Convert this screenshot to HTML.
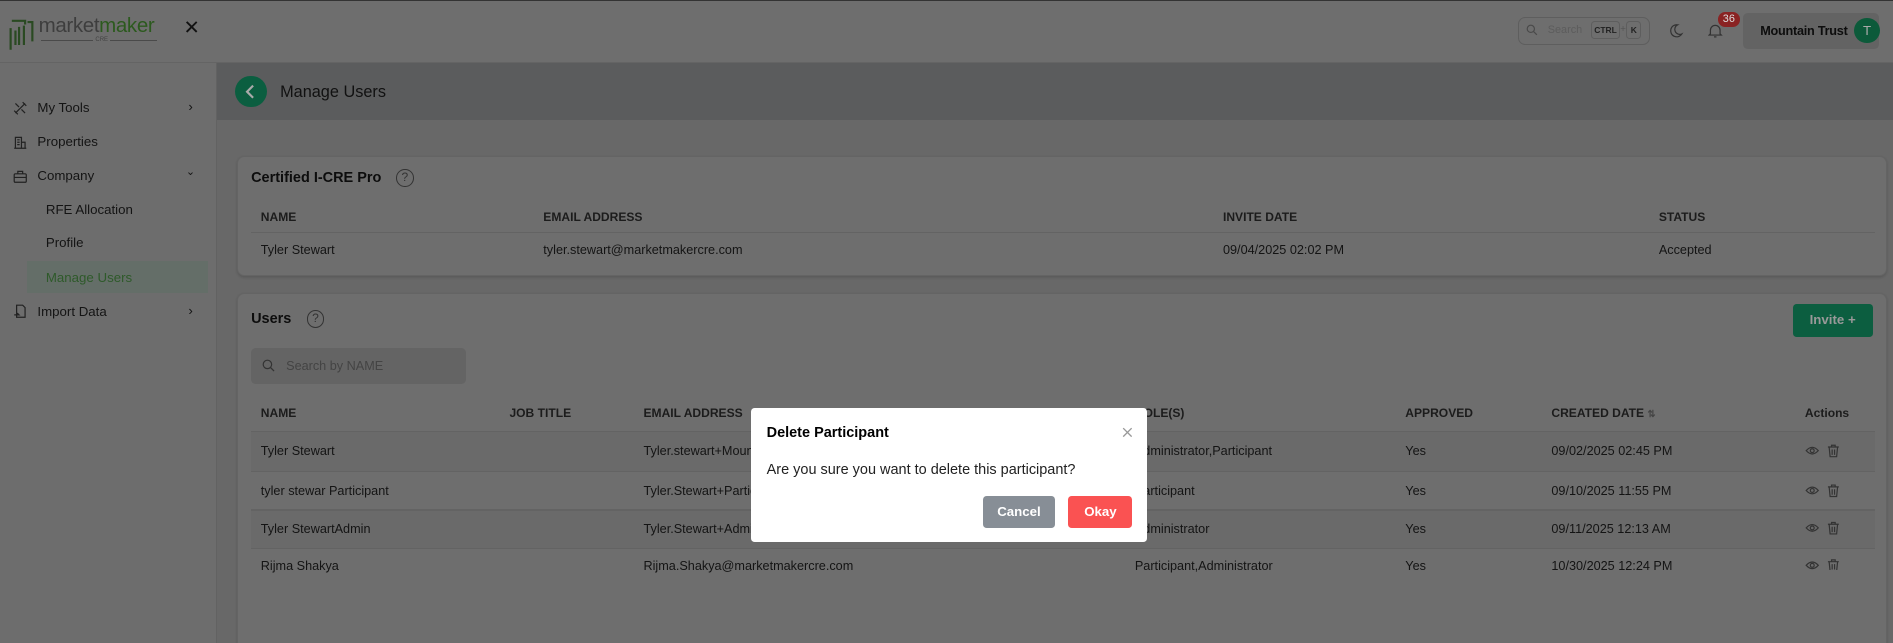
<!DOCTYPE html>
<html><head><meta charset="utf-8"><style>
html,body{margin:0;padding:0;width:1893px;height:643px;overflow:hidden;background:#686868;font-family:"Liberation Sans",sans-serif;}
#w{zoom:1.2073;width:1568px;height:533px;position:relative;color:#111;}
.a{position:absolute;white-space:nowrap;}
.hdr{left:0;top:0;width:1568px;height:52px;background:#6e6e6e;border-bottom:1px solid #646464;border-top:1px solid #333;box-sizing:border-box;}
.side{left:0;top:52px;width:180px;height:481px;background:#6d6d6d;border-right:1px solid #626262;box-sizing:border-box;}
.si{font-size:11px;color:#141414;}
.card{background:#6e6e6e;border:1px solid #646464;border-radius:6px;box-shadow:0 1px 2px rgba(0,0,0,.15);}
.th{font-size:10px;font-weight:bold;color:#1c1c1c;}
.td{font-size:10.5px;color:#141414;}
.line{height:1px;background:#636363;}
</style></head><body><div id="w">
<div class="a hdr"></div>
<svg class="a" style="left:6px;top:13px" width="30" height="30" viewBox="0 0 30 30"><path d="M4 4h11v3M3 10v18M7 12v12M10 9v15M14 8v16M17 5h4v16" stroke="#2a4a22" stroke-width="1.8" fill="none"/></svg>
<div class="a" style="left:32px;top:12px;font-size:17px;color:#3e3e3e;letter-spacing:-0.3px">market<span style="color:#2c5a1e">maker</span></div>
<div class="a" style="left:34px;top:33px;width:96px;height:1px;background:#4a4a4a"></div>
<div class="a" style="left:77px;top:31px;font-size:5px;color:#444;background:#6e6e6e;padding:0 2px">CRE</div>
<div class="a" style="left:152px;top:13px;font-size:16px;color:#111">✕</div>
<div class="a" style="left:1257px;top:14px;width:108px;height:22px;border:1px solid #5e5e5e;border-radius:6px"></div>
<svg class="a" style="left:1264px;top:20px" width="10" height="10" viewBox="0 0 10 10"><circle cx="4" cy="4" r="3" stroke="#4a4a4a" fill="none"/><path d="M6.2 6.2L9 9" stroke="#4a4a4a"/></svg>
<div class="a" style="left:1282px;top:20px;font-size:9px;color:#5c5c5c">Search</div>
<div class="a" style="left:1318px;top:17px;width:22px;height:14px;border:1px solid #5e5e5e;border-radius:3px;font-size:7px;font-weight:bold;text-align:center;line-height:14px;color:#222">CTRL</div>
<div class="a" style="left:1342px;top:20px;font-size:8px;color:#555">+</div>
<div class="a" style="left:1347px;top:17px;width:11px;height:14px;border:1px solid #5e5e5e;border-radius:3px;font-size:7px;font-weight:bold;text-align:center;line-height:14px;color:#222">K</div>
<svg class="a" style="left:1382px;top:19px" width="13" height="13" viewBox="0 0 13 13"><path d="M8 1.5A5 5 0 1 0 11.5 9 4 4 0 0 1 8 1.5z" stroke="#333" fill="none"/></svg>
<svg class="a" style="left:1415px;top:19px" width="12" height="13" viewBox="0 0 12 13"><path d="M2 9V6a4 4 0 0 1 8 0v3l1 1H1zM5 11.5h2" stroke="#333" fill="none"/></svg>
<div class="a" style="left:1423px;top:10px;width:18px;height:12px;background:#8a2323;border-radius:6px;color:#ddd;font-size:9px;text-align:center;line-height:12px">36</div>
<div class="a" style="left:1444px;top:11px;width:112px;height:30px;background:#636363;border-radius:4px"></div>
<div class="a" style="left:1458px;top:20px;font-size:10.5px;font-weight:bold;color:#0d0d0d;letter-spacing:-0.2px">Mountain Trust</div>
<div class="a" style="left:1536px;top:15px;width:21px;height:21px;border-radius:50%;background:#0c5a3a;color:#aaa;font-size:11px;text-align:center;line-height:21px">T</div>
<div class="a side"></div>
<div class="a" style="left:22px;top:216px;width:150px;height:27px;background:#646e68"></div>
<svg class="a" style="left:11px;top:84px" width="12" height="12" viewBox="0 0 12 12"><path d="M2 10L10 2M2 2l3 3M7 7l3 3M8 1l3 3M1 8l3 3" stroke="#222" fill="none"/></svg>
<div class="a si" style="left:31px;top:83px">My Tools</div><div class="a si" style="left:156px;top:82px">›</div>
<svg class="a" style="left:11px;top:112px" width="12" height="12" viewBox="0 0 12 12"><path d="M1 11h10M2 11V2h5v9M7 6h3v5M3.5 4h2M3.5 6h2M3.5 8h2" stroke="#222" fill="none"/></svg>
<div class="a si" style="left:31px;top:111px">Properties</div>
<svg class="a" style="left:11px;top:140px" width="12" height="12" viewBox="0 0 12 12"><rect x="1" y="4" width="10" height="7" rx="1" stroke="#222" fill="none"/><path d="M4 4V2h4v2M1 7h10" stroke="#222" fill="none"/></svg>
<div class="a si" style="left:31px;top:139px">Company</div><div class="a si" style="left:154px;top:137px;font-size:9px">⌄</div>
<div class="a si" style="left:38px;top:167px">RFE Allocation</div>
<div class="a si" style="left:38px;top:195px">Profile</div>
<div class="a si" style="left:38px;top:224px;color:#2e5a2a">Manage Users</div>
<svg class="a" style="left:11px;top:252px" width="12" height="12" viewBox="0 0 12 12"><path d="M3 1h5l2 2v8H3zM1 9h4l-1.5-1.5" stroke="#222" fill="none"/></svg>
<div class="a si" style="left:31px;top:252px">Import Data</div><div class="a si" style="left:156px;top:251px">›</div>
<div class="a" style="left:180px;top:52px;width:1388px;height:47px;background:#5b5c5d"></div>
<div class="a" style="left:195px;top:63px;width:26px;height:26px;border-radius:50%;background:#0b5e40"></div>
<svg class="a" style="left:195px;top:63px" width="26" height="26" viewBox="0 0 26 26"><path d="M15 8l-5 5 5 5" stroke="#aaa" stroke-width="1.8" fill="none"/></svg>
<div class="a" style="left:232px;top:69px;font-size:13.5px;color:#111">Manage Users</div>
<div class="a card" style="left:196px;top:129px;width:1365px;height:98px"></div>
<div class="a" style="left:208px;top:141px;font-size:12px;font-weight:bold;color:#0d0d0d">Certified I-CRE Pro</div>
<div class="a" style="left:328px;top:140px;width:13px;height:13px;border:1.3px solid #333;border-radius:50%;font-size:10px;text-align:center;line-height:13px;color:#333">?</div>
<div class="a th" style="left:216px;top:174px">NAME</div>
<div class="a th" style="left:450px;top:174px">EMAIL ADDRESS</div>
<div class="a th" style="left:1013px;top:174px">INVITE DATE</div>
<div class="a th" style="left:1374px;top:174px">STATUS</div>
<div class="a line" style="left:208px;top:192px;width:1345px"></div>
<div class="a td" style="left:216px;top:201px">Tyler Stewart</div>
<div class="a td" style="left:450px;top:201px">tyler.stewart@marketmakercre.com</div>
<div class="a td" style="left:1013px;top:201px">09/04/2025 02:02 PM</div>
<div class="a td" style="left:1374px;top:201px">Accepted</div>
<div class="a card" style="left:196px;top:243px;width:1365px;height:300px"></div>
<div class="a" style="left:208px;top:258px;font-size:12px;font-weight:bold;color:#0d0d0d">Users</div>
<div class="a" style="left:254px;top:257px;width:13px;height:13px;border:1.3px solid #333;border-radius:50%;font-size:10px;text-align:center;line-height:13px;color:#333">?</div>
<div class="a" style="left:1485px;top:252px;width:66px;height:27px;background:#0c5e40;border-radius:3px;color:#999;font-size:11px;font-weight:bold;text-align:center;line-height:27px">Invite +</div>
<div class="a" style="left:208px;top:288px;width:178px;height:30px;background:#646464;border-radius:4px"></div>
<svg class="a" style="left:217px;top:297px" width="11" height="11" viewBox="0 0 11 11"><circle cx="4.5" cy="4.5" r="3.5" stroke="#333" fill="none"/><path d="M7 7l3 3" stroke="#333"/></svg>
<div class="a" style="left:237px;top:297px;font-size:10.5px;color:#444">Search by NAME</div>
<div class="a th" style="left:216px;top:336px">NAME</div>
<div class="a th" style="left:422px;top:336px">JOB TITLE</div>
<div class="a th" style="left:533px;top:336px">EMAIL ADDRESS</div>
<div class="a th" style="left:940px;top:336px">ROLE(S)</div>
<div class="a th" style="left:1164px;top:336px">APPROVED</div>
<div class="a th" style="left:1285px;top:336px">CREATED DATE <span style="font-size:8px;color:#444">⇅</span></div>
<div class="a th" style="left:1495px;top:336px">Actions</div>
<div class="a line" style="left:208px;top:357px;width:1345px"></div>
<div class="a" style="left:208px;top:358px;width:1345px;height:32px;background:#6a6a6a"></div>
<div class="a" style="left:208px;top:423px;width:1345px;height:31px;background:#6a6a6a"></div>
<div class="a line" style="left:208px;top:390px;width:1345px"></div>
<div class="a line" style="left:208px;top:422px;width:1345px"></div>
<div class="a line" style="left:208px;top:454px;width:1345px"></div>
<div class="a td" style="left:216px;top:368px">Tyler Stewart</div><div class="a td" style="left:533px;top:368px">Tyler.stewart+Mountain</div><div class="a td" style="left:940px;top:368px">Administrator,Participant</div><div class="a td" style="left:1164px;top:368px">Yes</div><div class="a td" style="left:1285px;top:368px">09/02/2025 02:45 PM</div>
<div class="a td" style="left:216px;top:401px">tyler stewar Participant</div><div class="a td" style="left:533px;top:401px">Tyler.Stewart+Participant</div><div class="a td" style="left:940px;top:401px">Participant</div><div class="a td" style="left:1164px;top:401px">Yes</div><div class="a td" style="left:1285px;top:401px">09/10/2025 11:55 PM</div>
<div class="a td" style="left:216px;top:432px">Tyler StewartAdmin</div><div class="a td" style="left:533px;top:432px">Tyler.Stewart+Admin</div><div class="a td" style="left:940px;top:432px">Administrator</div><div class="a td" style="left:1164px;top:432px">Yes</div><div class="a td" style="left:1285px;top:432px">09/11/2025 12:13 AM</div>
<div class="a td" style="left:216px;top:463px">Rijma Shakya</div><div class="a td" style="left:533px;top:463px">Rijma.Shakya@marketmakercre.com</div><div class="a td" style="left:940px;top:463px">Participant,Administrator</div><div class="a td" style="left:1164px;top:463px">Yes</div><div class="a td" style="left:1285px;top:463px">10/30/2025 12:24 PM</div>
<svg class="a" style="left:1495px;top:368px" width="40" height="104" viewBox="0 0 40 104">
<g id="ic" stroke="#333" fill="none" stroke-width="1"><path d="M1 5.5Q6 0 11 5.5Q6 11 1 5.5z"/><circle cx="6" cy="5.5" r="1.6"/><path d="M19 2.5h9M22 2.5V1h3v1.5M20 2.5l.8 8h5.4l.8-8M22.5 4.5v4.5M24.5 4.5v4.5"/></g>
<use href="#ic" y="33"/><use href="#ic" y="64"/><use href="#ic" y="95"/></svg>
<div class="a" style="left:622px;top:338px;width:328px;height:111px;background:#fff;border-radius:3px"></div>
<div class="a" style="left:635px;top:352px;font-size:12px;font-weight:bold;color:#000">Delete Participant</div>
<svg class="a" style="left:929px;top:354px" width="9" height="9" viewBox="0 0 9 9"><path d="M1 1l7 7M8 1L1 8" stroke="#999" stroke-width="1.1"/></svg>
<div class="a" style="left:635px;top:383px;font-size:12px;color:#222">Are you sure you want to delete this participant?</div>
<div class="a" style="left:814px;top:411px;width:60px;height:26px;background:#878e96;border-radius:3px;color:#fff;font-size:11px;font-weight:bold;text-align:center;line-height:26px">Cancel</div>
<div class="a" style="left:885px;top:411px;width:53px;height:26px;background:#fa5252;border-radius:3px;color:#fff;font-size:11px;font-weight:bold;text-align:center;line-height:26px">Okay</div>
</div></body></html>
